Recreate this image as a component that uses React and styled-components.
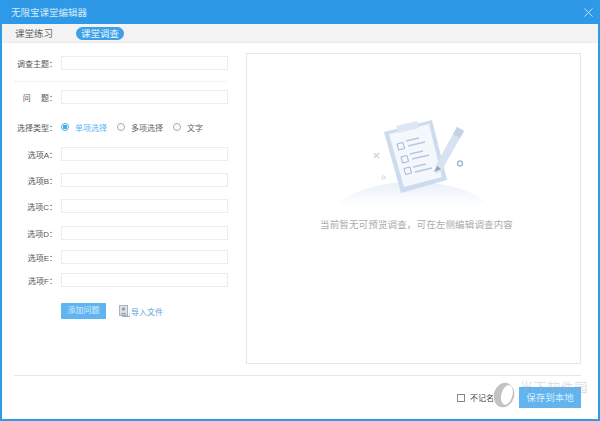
import React from 'react';
import styled, { createGlobalStyle } from 'styled-components';
import { X } from 'lucide-react';

const Global = createGlobalStyle`
  html, body { margin: 0; padding: 0; background: #fff; }
  body { font-family: "Liberation Sans", "Noto Sans CJK SC", sans-serif; }
`;

const App = () => {
  return (
    <Win>
      <Global />
      <TitleBar>
        <Title>无限宝课堂编辑器</Title>
        <Close><X size={15} strokeWidth={1.6} /></Close>
      </TitleBar>
      <Tabs>
        <Tab>课堂练习</Tab>
        <Tab active>课堂调查</Tab>
      </Tabs>
      <Body>
        <Form>
          <Row mt={13}>
            <Label>调查主题：</Label>
            <Field />
          </Row>
          <Dashed />
          <Row>
            <Label>问　 题：</Label>
            <Field />
          </Row>
          <TypeRow>
            <Label>选择类型：</Label>
            <Radio checked />
            <RadioText checked>单项选择</RadioText>
            <Radio />
            <RadioText>多项选择</RadioText>
            <Radio />
            <RadioText>文字</RadioText>
          </TypeRow>
          <Row mt={13}>
            <Label>选项A：</Label>
            <Field />
          </Row>
          <Row mt={12}>
            <Label>选项B：</Label>
            <Field />
          </Row>
          <Row mt={12}>
            <Label>选项C：</Label>
            <Field />
          </Row>
          <Row mt={13}>
            <Label>选项D：</Label>
            <Field />
          </Row>
          <Row mt={10}>
            <Label>选项E：</Label>
            <Field />
          </Row>
          <Row mt={9}>
            <Label>选项F：</Label>
            <Field />
          </Row>
          <Actions>
            <AddButton>添加问题</AddButton>
            <ImportLink>
              <svg width="11" height="12" viewBox="0 0 11 12">
                <rect x="0.5" y="0.5" width="8" height="10" fill="#dfe3e8" stroke="#a9b3bd" />
                <circle cx="4.5" cy="4" r="1.8" fill="#98a3ae" />
                <path d="M1.5 9.5c.6-2.4 5.4-2.4 6 0z" fill="#98a3ae" />
                <path d="M3 11.5h8V8" fill="none" stroke="#8fb3cf" />
              </svg>
              导入文件
            </ImportLink>
          </Actions>
        </Form>
        <Preview>
          <svg width="180" height="105" viewBox="325 110 180 105">
            <defs>
              <linearGradient id="hill" x1="0" y1="0" x2="0" y2="1">
                <stop offset="0" stopColor="#eaf0f9" />
                <stop offset="1" stopColor="#ffffff" />
              </linearGradient>
            </defs>
            <path d="M336 206C352 190 384 182 414 182s62 8 78 24z" fill="url(#hill)" />
            <path d="M385 132L433 120L448 180L402 193z" fill="#cddbee" />
            <path d="M390 134L430 124L443 177L405 187z" fill="#f4f7fc" />
            <path d="M397 126L418 121L420 128L399 133z" fill="#dde6f3" />
            <g fill="none" stroke="#a3b6d3" strokeWidth="1">
              <path d="M398 144l6-1.5 1.6 6-6 1.5z" />
              <path d="M402 157l6-1.5 1.6 6-6 1.5z" />
              <path d="M405 168.500l6-1.500 1.600 6-6 1.500z" />
            </g>
            <g fill="none" stroke="#b5c8e2" strokeWidth="1.300">
              <path d="M407 141l13-3M409 146l17-4M411 154l13-3M413 159l17-4M414 167l13-3M416 172l17-4" />
            </g>
            <path d="M437 165L458 127L465 131L443 170L437 174z" fill="#d8e2f0" />
            <path d="M454 134L458 127L465 131L461 138z" fill="#c3d2e6" />
            <path d="M435 172l3-6 4 3z" fill="#8ea5c6" />
            <path d="M375 153l5 5M380 153l-5 5" stroke="#c8d2e0" strokeWidth="1.200" />
            <circle cx="461" cy="163.500" r="2.400" fill="none" stroke="#a9bad2" strokeWidth="1.500" />
            <circle cx="384.500" cy="177.500" r="1.600" fill="none" stroke="#c8d4e4" strokeWidth="1" />
          </svg>
          <Hint>当前暂无可预览调查，可在左侧编辑调查内容</Hint>
        </Preview>
      </Body>
      <Footer>
        <Check />
        <CheckText>不记名</CheckText>
        <SaveButton>保存到本地</SaveButton>
        <Watermark>
          <svg width="24" height="28" viewBox="0 0 26 28">
            <path
              transform="rotate(15 13 14)"
              fillRule="evenodd"
              d="M2 14a11 13.500 0 1 0 22 0a11 13.500 0 1 0 -22 0zM10 13a6 11 0 1 0 12 0a6 11 0 1 0 -12 0z"
              fill="#c2c2c2"
            />
          </svg>
          <WatermarkText>
            <WatermarkName>当下软件园</WatermarkName>
            <WatermarkUrl>www.downxia.com</WatermarkUrl>
          </WatermarkText>
        </Watermark>
      </Footer>
    </Win>
  );
};

const Win = styled.div`
  position: relative;
  width: 600px;
  height: 421px;
  box-sizing: border-box;
  border: 2px solid #2e9aea;
  border-top: 0;
  background: #fff;
  overflow: hidden;
`;

const TitleBar = styled.div`
  display: flex;
  align-items: center;
  justify-content: space-between;
  height: 24px;
  margin: 0 -2px;
  padding: 0 4px 0 11px;
  background: #2e99e6;
`;

const Title = styled.span`
  font-size: 9.500px;
  color: #d5ebfb;
`;

const Close = styled.span`
  display: flex;
  color: #bfe0f8;
`;

const Tabs = styled.div`
  display: flex;
  align-items: center;
  gap: 18px;
  height: 18px;
  padding-left: 8px;
  background: #f3f3f3;
  border-bottom: 1px solid #ebebeb;
`;

const Tab = styled.span`
  font-size: 9.500px;
  line-height: 13px;
  padding: 0 5px;
  border-radius: 7px;
  color: ${p => (p.active ? '#e8f5ff' : '#666')};
  background: ${p => (p.active ? '#3d9fe6' : 'transparent')};
`;

const Body = styled.div`
  display: flex;
  height: 332px;
  margin: 0 17px 0 12px;
  border-bottom: 1px solid #e6e6e6;
`;

const Form = styled.div`
  width: 232px;
  flex-shrink: 0;
`;

const Row = styled.div`
  display: flex;
  align-items: center;
  height: 14px;
  margin-top: ${p => p.mt || 0}px;
`;

const Label = styled.span`
  width: 43px;
  margin-right: 4px;
  flex-shrink: 0;
  text-align: right;
  white-space: pre;
  font-size: 8px;
  color: #555;
`;

const Field = styled.div`
  width: 165px;
  height: 12px;
  border: 1px solid #ececec;
  background: #fff;
`;

const Dashed = styled.div`
  height: 0;
  margin: 11px 18px 8px 0;
  border-top: 1px dotted #e8e8e8;
`;

const TypeRow = styled(Row)`
  margin-top: 16px;
`;

const Radio = styled.span`
  display: block;
  box-sizing: border-box;
  width: 8px;
  height: 8px;
  border-radius: 50%;
  border: 1px solid ${p => (p.checked ? '#47a9ee' : '#aaa')};
  background: ${p => (p.checked ? 'radial-gradient(circle, #47a9ee 0 2px, #fff 2.5px)' : '#fff')};
`;

const RadioText = styled.span`
  width: 48px;
  padding-left: 6px;
  box-sizing: border-box;
  font-size: 8px;
  color: ${p => (p.checked ? '#5ab6f3' : '#666')};
`;

const Actions = styled.div`
  display: flex;
  align-items: center;
  margin: 16px 0 0 47px;
`;

const AddButton = styled.div`
  width: 45px;
  height: 16px;
  line-height: 16px;
  text-align: center;
  font-size: 8px;
  color: #d8eefd;
  background: #5fb4f1;
  border-radius: 1px;
`;

const ImportLink = styled.div`
  display: flex;
  align-items: center;
  gap: 1px;
  margin-left: 13px;
  font-size: 8px;
  color: #5aa5dc;
`;

const Preview = styled.div`
  display: flex;
  flex-direction: column;
  align-items: center;
  box-sizing: border-box;
  width: 336px;
  height: 311px;
  margin-top: 10px;
  padding-top: 56px;
  border: 1px solid #e6e6e6;
`;

const Hint = styled.div`
  margin: 2px 0 0 6px;
  font-size: 9.500px;
  letter-spacing: 0.15px;
  color: #ababab;
`;

const Footer = styled.div`
  display: flex;
  align-items: center;
  height: 43px;
  padding: 0 17px 0 455px;
`;

const Check = styled.span`
  width: 6px;
  height: 6px;
  border: 1px solid #888;
  background: #fff;
`;

const CheckText = styled.span`
  margin-left: 5px;
  font-size: 8px;
  color: #444;
`;

const SaveButton = styled.div`
  margin-left: auto;
  width: 62px;
  height: 21px;
  line-height: 21px;
  text-align: center;
  font-size: 9.500px;
  color: #d8eefd;
  background: #5fb4f1;
`;

const Watermark = styled.div`
  position: absolute;
  left: 490px;
  top: 381px;
  display: flex;
  align-items: flex-start;
  pointer-events: none;
`;

const WatermarkText = styled.div`
  display: flex;
  flex-direction: column;
  margin-left: 4px;
  white-space: nowrap;
`;

const WatermarkName = styled.span`
  font-size: 13px;
  line-height: 14px;
  letter-spacing: 0.600px;
  color: rgba(170, 170, 170, 0.4);
`;

const WatermarkUrl = styled.span`
  margin-top: 5px;
  font-size: 7.500px;
  line-height: 9px;
  color: rgba(170, 170, 170, 0.35);
`;

export default App;
